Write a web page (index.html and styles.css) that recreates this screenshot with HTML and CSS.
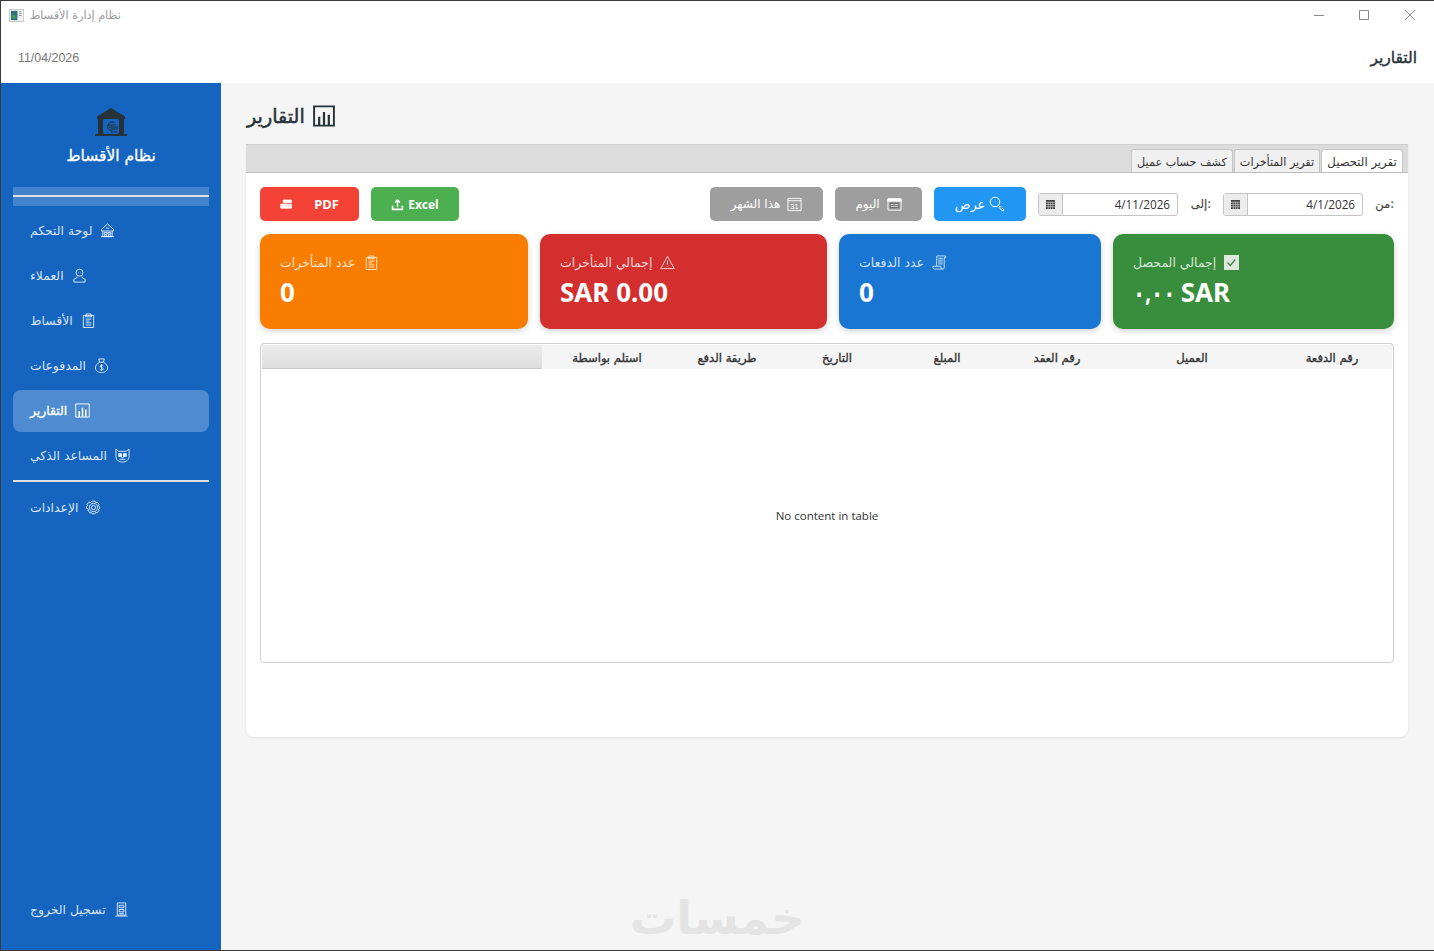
FILE: index.html
```html
<!DOCTYPE html>
<html lang="ar">
<head>
  <meta charset="UTF-8">
  <title>نظام إدارة الأقساط</title>
  <link rel="stylesheet" href="styles.css">
</head>
<body>

  <!-- Icons -->
  <svg class="sprite" xmlns="http://www.w3.org/2000/svg">
    <symbol id="i-home" viewBox="0 0 16 16"><path d="M8 1 14.5 7v1.5h-13V7zM3 8.5v6h10v-6M1 14.500h14M4.500 10h3v2h-3zM8.500 10h3v2h-3zM5 12.500v2M7 12.500v2M9 12.500v2M11 12.500v2M6.500 5.500h3"/></symbol>
    <symbol id="i-user" viewBox="0 0 16 16"><circle cx="8" cy="5" r="3.7"/><path d="M5.600 9 5 10.500 2 12v3h12v-3l-3-1.500L10.400 9M6.500 5h.5M9 5h.5"/></symbol>
    <symbol id="i-clip" viewBox="0 0 16 16"><path d="M2.500 2.500h11v13h-11zM5.500 2.500V1h5v1.500l1 1.500h-7zM5 6.500h6M5 8.500h4M5 10.500h6M5 12.800h6"/></symbol>
    <symbol id="i-bag" viewBox="0 0 16 16"><path d="M5 1h6l-1 3.500H6zM6 4.500C3 6 1.500 8.500 1.500 10.500c0 3 3 5 6.500 5s6.500-2 6.500-5c0-2-1.500-4.500-4.500-6"/><path d="M9.800 8.200C9.200 7.400 6.500 7.300 6.500 8.900s3.300 1 3.300 2.600-2.800 1.500-3.500.6M8 6.500v7"/></symbol>
    <symbol id="i-chart" viewBox="0 0 16 16"><path d="M.8 1h14.400v14H.8z"/><path d="M4.500 15V8.500M8 15V5M11.500 15V7" stroke-width="1.600"/></symbol>
    <symbol id="i-robot" viewBox="0 0 16 16"><path d="M1 1 4 3.500h8L15 1v8c0 3.500-3 6-7 6s-7-2.500-7-6z"/><path d="M4 6h3v3H4zM9 6h3v3H9z" fill="currentColor"/><path d="M5 12h6M7 9.500 8 11l1-1.500"/></symbol>
    <symbol id="i-gear" viewBox="0 0 16 16"><circle cx="8" cy="8" r="2.2"/><circle cx="8" cy="8" r="4.3"/><path d="M6.500 1.200h3l.8 1.500 1.700-.3 1.800 2-.5 1.600 1.200 1.200v1.600l-1.200 1.200.5 1.600-1.800 2-1.700-.3-.8 1.500h-3l-.8-1.500-1.700.3-1.800-2 .5-1.600L.5 8.800V7.200l1.200-1.200-.5-1.600 1.800-2 1.700.3z"/></symbol>
    <symbol id="i-door" viewBox="0 0 16 16"><path d="M3.500 1h9v13h-9zM1.500 15h13M5.500 3.500h5v2.500h-5zM5.500 8h5v2.500h-5zM5.500 12.500h5"/></symbol>
    <symbol id="i-print" viewBox="0 0 16 16"><path d="M4 2.500h10v3H4zM1 7.500h13v5H1z" fill="currentColor"/><path d="M3 9h9v1H3z" fill="#f44336"/></symbol>
    <symbol id="i-upload" viewBox="0 0 16 16"><path d="M1 9.500V15h14V9.500h-2V13H3V9.500z" fill="currentColor" stroke="none"/><path d="M8 11V3M5 5.500 8 2.200l3 3.300" stroke-width="1.800"/></symbol>
    <symbol id="i-cal" viewBox="0 0 16 16"><path d="M1 1.500h14v13H1zM1 4h14"/><text x="8" y="12.500" class="cal-num">31</text></symbol>
    <symbol id="i-today" viewBox="0 0 16 16"><path d="M1 2h14v12H1z"/><path d="M1 2h14v2.500H1z" fill="currentColor"/><path d="M3 6h10v6H3z" fill="#6f6f6f" stroke="none"/><path d="M4 8h3M8 8h4M4 10h8" stroke-width=".8"/></symbol>
    <symbol id="i-search" viewBox="0 0 16 16"><circle cx="6" cy="6" r="4.800"/><path d="m9.500 9.500 1.500 1.500M11 10 15 14 13.800 15.200 9.800 11.200"/></symbol>
    <symbol id="i-warn" viewBox="0 0 16 16"><path d="M8 1.500 15.200 14.500H.8zM8 6v4.500M8 11.800v1"/></symbol>
    <symbol id="i-receipt" viewBox="0 0 16 16"><path d="M5 1h9.500v2H13v10.500c0 1-.8 1.500-1.500 1.500h-9c-1 0-1.500-.8-1.500-1.500V12h8.500v1.500c0 1 1 1.500 2 1.500M5 12V2.500C5 1.500 4.500 1 5 1M6.500 3.500h5M6.500 5.500h5M6.500 7.500h5M6.500 9.500h5"/></symbol>
    <symbol id="i-grid" viewBox="0 0 10 10"><path d="M0 0h10v10H0z" fill="currentColor"/><path d="M0 2.500h10M0 5h10M0 7.500h10M2.500 2v8M5 2v8M7.500 2v8" stroke="#e6e6e6" stroke-width=".6"/></symbol>
  </svg>

  <div class="window">

    <!-- Title bar -->
    <div class="titlebar">
      <div class="app-name">
        <svg class="app-icon" viewBox="0 0 16 14" width="15" height="13"><path d="M0 0h16v14H0z" fill="#c9c9c9"/><path d="M1 1h14v12H1z" fill="#f2f2f2"/><path d="M2 2h7v10H2z" fill="#2f6f7a"/><path d="M3 8l2-3 3 5H3z" fill="#3f9d5c"/><path d="M10.500 3h3M10.500 5h3M10.500 7h3" stroke="#999"/></svg>
        <span>نظام إدارة الأقساط</span>
      </div>
      <div class="win-controls">
        <svg viewBox="0 0 10 10" width="10" height="10"><path d="M0 5.500h10"/></svg>
        <svg viewBox="0 0 10 10" width="10" height="10"><path d="M.5.500h9v9h-9z"/></svg>
        <svg viewBox="0 0 10 10" width="10" height="10"><path d="m0 0 10 10M10 0 0 10"/></svg>
      </div>
    </div>

    <!-- Header -->
    <div class="header">
      <span class="header-date">11/04/2026</span>
      <span class="header-title">التقارير</span>
    </div>

    <div class="main">

      <!-- Sidebar -->
      <div class="sidebar">
        <div class="brand">
          <svg class="brand-icon" viewBox="0 0 32 28" width="32" height="28">
            <path d="M16 0 30 8.500V11H2V8.500z" fill="#263238"/>
            <path d="M3 10h22v16H3zM25 10h4v16h-4z" fill="#263238"/>
            <rect x="8" y="11" width="16" height="15" rx="2" fill="#1565c0"/>
            <path d="M0 26h32v2H0z" fill="#263238"/>
            <path d="M20 15a4.500 4.500 0 1 0-3 8M13 17h8M14 19h9M15 21h8M16 24h6" fill="none" stroke="#263238"/>
          </svg>
          <div class="brand-name">نظام الأقساط</div>
        </div>
        <div class="band"><div class="band-line"></div></div>

        <a class="nav-item"><span>لوحة التحكم</span><svg class="icon"><use href="#i-home"/></svg></a>
        <a class="nav-item"><span>العملاء</span><svg class="icon"><use href="#i-user"/></svg></a>
        <a class="nav-item"><span>الأقساط</span><svg class="icon"><use href="#i-clip"/></svg></a>
        <a class="nav-item"><span>المدفوعات</span><svg class="icon"><use href="#i-bag"/></svg></a>
        <a class="nav-item active"><span>التقارير</span><svg class="icon"><use href="#i-chart"/></svg></a>
        <a class="nav-item"><span>المساعد الذكي</span><svg class="icon"><use href="#i-robot"/></svg></a>
        <div class="nav-sep"></div>
        <a class="nav-item"><span>الإعدادات</span><svg class="icon"><use href="#i-gear"/></svg></a>
        <a class="nav-item logout"><span>تسجيل الخروج</span><svg class="icon"><use href="#i-door"/></svg></a>
      </div>

      <!-- Content -->
      <div class="content">
        <div class="page-title"><span>التقارير</span><svg class="title-icon"><use href="#i-chart"/></svg></div>

        <div class="panel">
          <div class="tabs">
            <div class="tab tab-account">كشف حساب عميل</div>
            <div class="tab tab-late">تقرير المتأخرات</div>
            <div class="tab tab-collect selected">تقرير التحصيل</div>
          </div>

          <div class="panel-body">
            <div class="toolbar">
              <button class="btn btn-pdf"><svg class="icon small"><use href="#i-print"/></svg><span>PDF</span></button>
              <button class="btn btn-excel"><svg class="icon small"><use href="#i-upload"/></svg><span>Excel</span></button>
              <div class="spacer"></div>
              <button class="btn btn-grey btn-month"><span>هذا الشهر</span><svg class="icon"><use href="#i-cal"/></svg></button>
              <button class="btn btn-grey btn-today"><span>اليوم</span><svg class="icon"><use href="#i-today"/></svg></button>
              <button class="btn btn-blue"><span>عرض</span><svg class="icon"><use href="#i-search"/></svg></button>
              <div class="date-field"><span class="date-btn"><svg width="9" height="9"><use href="#i-grid"/></svg></span><span class="date-value">4/11/2026</span></div>
              <span class="date-label label-to">إلى:</span>
              <div class="date-field"><span class="date-btn"><svg width="9" height="9"><use href="#i-grid"/></svg></span><span class="date-value">4/1/2026</span></div>
              <span class="date-label label-from">من:</span>
            </div>

            <div class="cards">
              <div class="card card-orange">
                <div class="card-label"><span>عدد المتأخرات</span><svg class="icon"><use href="#i-clip"/></svg></div>
                <div class="card-value">0</div>
              </div>
              <div class="card card-red">
                <div class="card-label"><span>إجمالي المتأخرات</span><svg class="icon warn"><use href="#i-warn"/></svg></div>
                <div class="card-value">SAR 0.00</div>
              </div>
              <div class="card card-blue">
                <div class="card-label"><span>عدد الدفعات</span><svg class="icon"><use href="#i-receipt"/></svg></div>
                <div class="card-value">0</div>
              </div>
              <div class="card card-green">
                <div class="card-label"><span>إجمالي المحصل</span><span class="check"><svg viewBox="0 0 15 15" width="15" height="15"><path d="M0 0h15v15H0z" fill="#e0e6e0"/><path d="m3.500 7.500 2.800 3 5-6" fill="none" stroke="#388e3c" stroke-width="1.2"/></svg></span></div>
                <div class="card-value"><span class="arabic-num">٠,٠٠</span> SAR</div>
              </div>
            </div>

            <div class="table-box">
              <div class="table-head">
                <div class="th-filler"></div>
                <div class="th w130">استلم بواسطة</div>
                <div class="th w110">طريقة الدفع</div>
                <div class="th w110">التاريخ</div>
                <div class="th w110">المبلغ</div>
                <div class="th w110">رقم العقد</div>
                <div class="th w160">العميل</div>
                <div class="th w120">رقم الدفعة</div>
              </div>
              <div class="table-empty">No content in table</div>
            </div>
          </div>
        </div>

        <div class="watermark">خمسات</div>
      </div>
    </div>
  </div>
</body>
</html>
```

FILE: styles.css
```css
/* General Styles */
body {
  margin: 0;
  font-family: "DejaVu Sans", "Noto Sans", sans-serif;
  background-color: #f5f5f5;
  overflow: hidden;
}

.sprite {
  display: none;
}

.window {
  width: 1434px;
  height: 951px;
  box-sizing: border-box;
  border-top: 1px solid #3a3a3a;
  border-left: 1px solid #3a3a3a;
  border-bottom: 1px solid #3a3a3a;
  display: flex;
  flex-direction: column;
  overflow: hidden;
}

.icon {
  width: 15px;
  height: 15px;
  fill: none;
  stroke: currentColor;
  stroke-width: 1;
  flex-shrink: 0;
}

.icon.small {
  width: 13px;
  height: 13px;
}

.cal-num {
  font-family: "Liberation Sans", sans-serif;
  font-size: 8px;
  text-anchor: middle;
  fill: currentColor;
  stroke: none;
}

/* Title bar */
.titlebar {
  height: 31px;
  box-sizing: border-box;
  background-color: #fff;
  display: flex;
  align-items: center;
  justify-content: space-between;
  padding: 0 19px 3px 8px;
}

.app-name {
  display: flex;
  align-items: center;
  gap: 6px;
  color: #9a9a9a;
  font-size: 11.2px;
}

.win-controls {
  display: flex;
  gap: 35px;
}

.win-controls svg {
  fill: none;
  stroke: #8a8a8a;
  stroke-width: 1;
}

.win-controls svg:last-child {
  margin-left: 1px;
}

/* Header */
.header {
  height: 51px;
  background-color: #fff;
  display: flex;
  align-items: center;
  justify-content: space-between;
  padding: 0 17px;
}

.header-date {
  font-family: "Liberation Sans", sans-serif;
  font-size: 12.4px;
  color: #777;
}

.header-title {
  font-size: 15.5px;
  -webkit-text-stroke: 0.4px #263238;
  color: #263238;
}

.main {
  flex: 1;
  display: flex;
  min-height: 0;
}

/* Sidebar */
.sidebar {
  width: 220px;
  box-sizing: border-box;
  background-color: #1565c0;
  padding: 25px 12px 19px;
  display: flex;
  flex-direction: column;
  gap: 3px;
}

.brand {
  display: flex;
  flex-direction: column;
  align-items: center;
  gap: 8px;
  height: 76px;
}

.brand-name {
  color: #fff;
  font-size: 15.5px;
  -webkit-text-stroke: 0.3px #fff;
  line-height: 24px;
}

.band {
  height: 19px;
  margin-bottom: 1px;
  background-color: rgba(255, 255, 255, 0.2);
  padding-top: 8px;
  box-sizing: border-box;
}

.band-line {
  height: 2px;
  background-color: #e0e0e0;
}

.nav-item {
  height: 42px;
  box-sizing: border-box;
  padding: 0 17px 2px;
  display: flex;
  align-items: center;
  gap: 8px;
  color: rgba(255, 255, 255, 0.85);
  font-size: 12.4px;
  border-radius: 8px;
}

.nav-item.active {
  background-color: rgba(255, 255, 255, 0.25);
  color: #fff;
  -webkit-text-stroke: 0.35px #fff;
}

.nav-sep {
  height: 2px;
  background-color: #e0e0e0;
  margin: 0 0 2px;
}

.logout {
  margin-top: auto;
}

/* Content */
.content {
  flex: 1;
  position: relative;
  padding: 17px 26px 0 25px;
}

.page-title {
  height: 32px;
  margin-bottom: 12px;
  padding-left: 1px;
  display: flex;
  align-items: center;
  gap: 8px;
  font-size: 19.2px;
  -webkit-text-stroke: 0.5px #263238;
  color: #263238;
}

.title-icon {
  width: 22px;
  height: 22px;
  fill: none;
  stroke: #263238;
  stroke-width: 1.4;
}

.panel {
  height: 593px;
  background-color: #fff;
  border-radius: 0 0 8px 8px;
  box-shadow: 0 1px 2px rgba(0, 0, 0, 0.08);
}

/* Tabs */
.tabs {
  height: 29px;
  box-sizing: border-box;
  background-color: #dcdcdc;
  border-top: 1px solid #cfcfcf;
  border-bottom: 1px solid #bdbdbd;
  display: flex;
  justify-content: flex-end;
  align-items: flex-end;
  gap: 1px;
  padding-right: 5px;
}

.tab {
  height: 23px;
  box-sizing: border-box;
  padding-top: 2px;
  display: flex;
  align-items: center;
  justify-content: center;
  background-color: #f0f0f0;
  border: 1px solid #c4c4c4;
  border-bottom: none;
  border-radius: 3px 3px 0 0;
  font-size: 11.7px;
  color: #333;
}

.tab-account {
  width: 102px;
  font-size: 11.2px;
}

.tab-late {
  width: 86px;
  font-size: 11.2px;
}

.tab-collect {
  width: 82px;
}

.tab.selected {
  background-color: #fff;
}

.panel-body {
  padding: 14px 14px 0;
}

/* Toolbar */
.toolbar {
  display: flex;
  align-items: center;
  gap: 12px;
  height: 34px;
  margin-bottom: 13px;
}

.spacer {
  flex: 1;
}

.btn {
  height: 34px;
  border: none;
  border-radius: 5px;
  color: #fff;
  font-family: "DejaVu Sans", sans-serif;
  font-size: 12px;
  display: flex;
  align-items: center;
  justify-content: center;
  gap: 7px;
  padding: 0;
}

.btn-pdf {
  width: 99px;
  background-color: #f44336;
  font-family: "Noto Sans", sans-serif;
  font-size: 13px;
  font-weight: bold;
  gap: 21px;
}

.btn-excel {
  width: 88px;
  background-color: #4caf50;
  font-family: "Noto Sans", sans-serif;
  font-weight: bold;
  gap: 4px;
}

.btn-grey {
  background-color: #9e9e9e;
}

.btn-month {
  width: 113px;
}

.btn-today {
  width: 87px;
}

.btn-blue {
  width: 92px;
  background-color: #2196f3;
  font-size: 13px;
  gap: 4px;
}

.btn-blue .icon {
  width: 16px;
  height: 16px;
}

.date-field {
  width: 140px;
  height: 23px;
  box-sizing: border-box;
  border: 1px solid #c4c4c4;
  border-radius: 3px;
  display: flex;
  align-items: center;
}

.date-btn {
  width: 24px;
  height: 100%;
  box-sizing: border-box;
  display: flex;
  align-items: center;
  justify-content: center;
  background-color: #ececec;
  border-right: 1px solid #c4c4c4;
  color: #444;
}

.date-value {
  flex: 1;
  text-align: right;
  padding-right: 7px;
  font-family: "Open Sans", sans-serif;
  font-size: 11.7px;
  color: #333;
}

.date-label {
  font-size: 11.5px;
  color: #444;
  -webkit-text-stroke: 0.2px #444;
  text-align: right;
}

.label-to {
  width: 21px;
}

.label-from {
  width: 19px;
}

/* Cards */
.cards {
  display: grid;
  grid-template-columns: 268fr 287fr 262fr 281fr;
  gap: 12px;
  margin-bottom: 14px;
}

.card {
  height: 95px;
  box-sizing: border-box;
  border-radius: 10px;
  padding: 19px 20px;
  color: #fff;
  box-shadow: 0 2px 6px rgba(0, 0, 0, 0.18);
}

.card-label {
  display: flex;
  align-items: center;
  gap: 8px;
  height: 18px;
  font-size: 12.5px;
  color: rgba(255, 255, 255, 0.8);
}

.card-value {
  margin-top: 4px;
  font-family: "Noto Sans", "DejaVu Sans", sans-serif;
  font-size: 26px;
  line-height: 34px;
  font-weight: bold;
}

/* the font's Arabic zeros run wider than the original, so squeeze them */
.arabic-num {
  display: inline-block;
  transform: scaleX(0.77);
  transform-origin: left center;
  margin-right: -14px;
}

.card-orange {
  background-color: #f97d00;
}

.card-red {
  background-color: #d32f2f;
}

.card-blue {
  background-color: #1976d2;
}

.card-green {
  background-color: #388e3c;
}

.check {
  display: flex;
}

/* Table */
.table-box {
  height: 320px;
  box-sizing: border-box;
  border: 1px solid #d0d0d0;
  border-radius: 4px;
  padding: 1px;
  display: flex;
  flex-direction: column;
}

.table-head {
  height: 24px;
  display: flex;
  background-color: #f5f5f5;
  flex-shrink: 0;
}

.th-filler {
  width: 280px;
  background: linear-gradient(#ececec, #dedede);
  border-bottom: 1px solid #c8c8c8;
}

.th {
  text-align: center;
  font-size: 11.6px;
  -webkit-text-stroke: 0.35px #333;
  line-height: 26px;
  color: #333;
}

.w110 {
  width: 110px;
}

.w120 {
  width: 120px;
}

.w130 {
  width: 130px;
}

.w160 {
  width: 160px;
}

.table-empty {
  flex: 1;
  display: flex;
  align-items: center;
  justify-content: center;
  font-family: "Open Sans", sans-serif;
  font-size: 11.5px;
  color: #333;
}

/* Watermark */
.watermark {
  position: absolute;
  left: 409px;
  bottom: 5px;
  font-size: 46px;
  font-weight: bold;
  color: #e4e4e4;
}
```
